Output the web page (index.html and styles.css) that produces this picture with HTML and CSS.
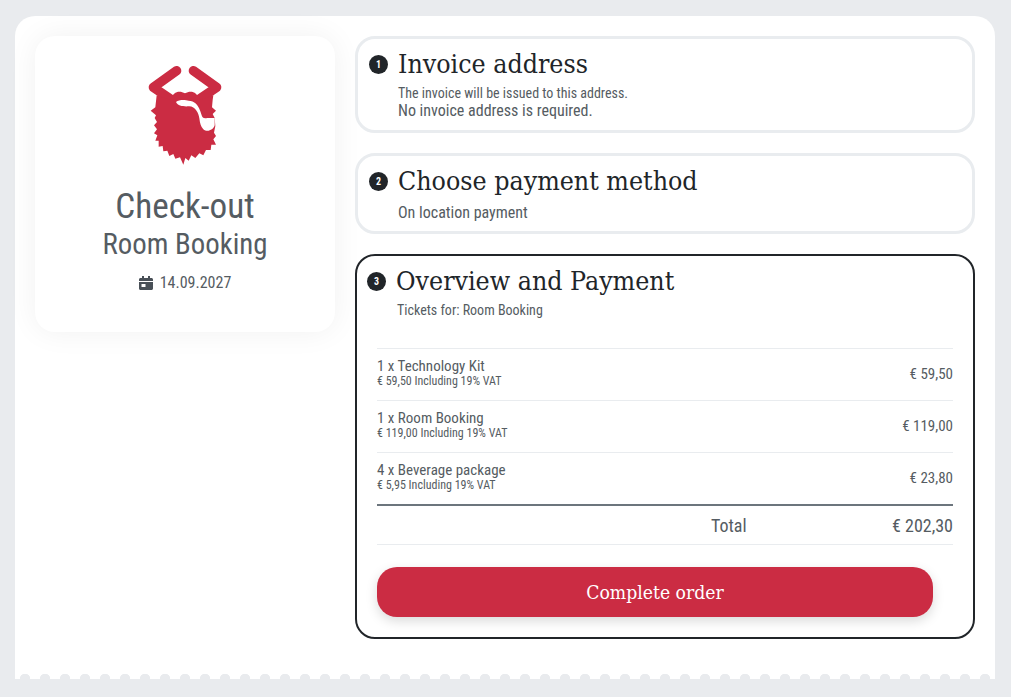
FILE: index.html
```html
<!DOCTYPE html>
<html lang="en">
<head>
    <meta charset="UTF-8">
    <title>Check-out</title>
    <link rel="stylesheet" href="styles.css">
</head>
<body>
    <div class="sheet">
        <aside class="event-card">
            <svg class="logo" viewBox="0 0 390 375" width="130" height="125">
                <path class="logo-horn" d="M170 62 L100 112 L150 146 M220 62 L290 112 L240 146"/>
                <path class="logo-beard" d="M110 136 L150 150 C160 124 178 120 195 130 C212 120 230 124 240 150 L280 136 L278 150 L276 172 L288 182 L278 192 L284 204 L286 228 L282 248 L288 258 L280 268 L288 284 L274 284 L272 300 L258 300 L250 316 L238 310 L226 324 L214 316 L206 332 L196 324 L190 344 L180 322 L166 326 L160 312 L148 318 L142 302 L130 304 L128 288 L116 290 L116 272 L106 272 L112 256 L102 250 L111 238 L102 226 L111 216 L104 204 L108 196 L92 182 L106 172 Z"/>
                <path class="logo-pipe" d="M168 156 C178 148 196 150 206 152 C222 152 236 162 245 196 C247 204 252 206 262 204 L284 204 L284 226 C280 240 262 248 250 238 C242 230 240 220 238 205 C236 190 226 168 206 169 C190 170 174 168 168 156 Z"/>
            </svg>
            <h1 class="event-title">Check-out</h1>
            <h2 class="event-name">Room Booking</h2>
            <p class="event-date">
                <svg class="calendar" viewBox="0 0 14 14" width="14" height="14">
                    <path d="M3 0h2v2h4V0h2v2h1.500C13.300 2 14 2.700 14 3.500V5H0V3.500C0 2.700.7 2 1.500 2H3zM0 6h14v6.500c0 .8-.7 1.500-1.500 1.500h-11C.7 14 0 13.300 0 12.500zm2.500 2v3h4V8z"/>
                </svg>
                14.09.2027
            </p>
        </aside>

        <main class="steps">
            <section class="step">
                <div class="step-head">
                    <span class="step-num">1</span>
                    <h3 class="step-title">Invoice address</h3>
                </div>
                <p class="step-note">The invoice will be issued to this address.</p>
                <p class="step-text">No invoice address is required.</p>
            </section>

            <section class="step step-two">
                <div class="step-head">
                    <span class="step-num">2</span>
                    <h3 class="step-title">Choose payment method</h3>
                </div>
                <p class="step-method">On location payment</p>
            </section>

            <section class="step step-active">
                <div class="step-head">
                    <span class="step-num">3</span>
                    <h3 class="step-title">Overview and Payment</h3>
                </div>
                <p class="step-tickets">Tickets for: Room Booking</p>

                <div class="order">
                    <div class="order-row">
                        <div class="item-info">
                            <div class="item-name">1 x Technology Kit</div>
                            <div class="item-vat">€ 59,50 Including 19% VAT</div>
                        </div>
                        <div class="item-price">€ 59,50</div>
                    </div>
                    <div class="order-row">
                        <div class="item-info">
                            <div class="item-name">1 x Room Booking</div>
                            <div class="item-vat">€ 119,00 Including 19% VAT</div>
                        </div>
                        <div class="item-price">€ 119,00</div>
                    </div>
                    <div class="order-row">
                        <div class="item-info">
                            <div class="item-name">4 x Beverage package</div>
                            <div class="item-vat">€ 5,95 Including 19% VAT</div>
                        </div>
                        <div class="item-price">€ 23,80</div>
                    </div>
                    <div class="order-total">
                        <span class="total-label">Total</span>
                        <span class="total-value">€ 202,30</span>
                    </div>
                </div>

                <button class="complete-btn">Complete order</button>
            </section>
        </main>
    </div>
</body>
</html>
```

FILE: styles.css
```css
* {
    box-sizing: border-box;
}
html, body {
    height: 100%;
}
body {
    margin: 0;
    padding: 16px 16px 18px 15px;
    overflow: hidden;
    background-color: #e9ebee;
    font-family: Roboto, sans-serif;
    font-stretch: condensed;
    color: #555c62;
}
h1, h2, h3, p {
    margin: 0;
    font-weight: 400;
}

.sheet {
    display: flex;
    align-items: flex-start;
    gap: 20px;
    height: 663px;
    padding: 20px 20px 0;
    background-color: #fff;
    border-radius: 20px 20px 0 0;
    background-image: radial-gradient(circle at 10px 5px, #e9ebee 5px, transparent 5.500px);
    background-size: 20px 5px;
    background-position: 0 100%;
    background-repeat: repeat-x;
}

.event-card {
    width: 300px;
    height: 296px;
    padding-top: 22px;
    flex-shrink: 0;
    text-align: center;
    background-color: #fff;
    border-radius: 20px;
    box-shadow: 0 0 30px rgba(0, 0, 0, 0.06);
}
.logo {
    display: block;
    margin: -8px auto 0;
}
.logo-horn {
    fill: none;
    stroke: #cb2c43;
    stroke-width: 28;
    stroke-linecap: round;
    stroke-linejoin: round;
}
.logo-beard {
    fill: #cb2c43;
}
.logo-pipe {
    fill: #fff;
}
.event-title {
    margin-top: 10px;
    font-size: 35.200px;
    line-height: 43px;
}
.event-name {
    font-size: 28.800px;
    line-height: 32px;
}
.event-date {
    display: flex;
    align-items: center;
    justify-content: center;
    gap: 7px;
    margin-top: 13px;
    font-size: 16px;
    line-height: 20px;
}
.calendar {
    fill: #495057;
}

.steps {
    flex: 1;
    display: flex;
    flex-direction: column;
    gap: 20px;
}
.step {
    height: 97px;
    padding: 10px 11px 0;
    border: 3px solid #e9ecef;
    border-radius: 20px;
}
.step-two {
    height: 81px;
}
.step-active {
    height: 385px;
    padding: 10px 20px 0;
    border: 2px solid #212529;
}
.step-head {
    display: flex;
    align-items: center;
    gap: 10px;
    height: 30px;
}
.step-active .step-head {
    margin-left: -10px;
}
.step-num {
    display: flex;
    align-items: center;
    justify-content: center;
    width: 19px;
    height: 19px;
    border-radius: 50%;
    background-color: #212529;
    color: #fff;
    font-size: 10px;
    font-weight: 700;
}
.step-title {
    font-family: "DejaVu Serif", serif;
    font-stretch: condensed;
    font-size: 26.500px;
    line-height: 30px;
    color: #212529;
}
.step-note {
    margin: 6px 0 0 29px;
    font-size: 14px;
    line-height: 16px;
}
.step-text {
    margin-left: 29px;
    font-size: 16px;
    line-height: 20px;
}
.step-method {
    margin: 8px 0 0 29px;
    font-size: 16px;
    line-height: 18px;
}
.step-tickets {
    margin: 5px 0 0 20px;
    font-size: 14px;
    line-height: 18px;
}

.order {
    margin-top: 29px;
}
.order-row {
    display: flex;
    justify-content: space-between;
    align-items: center;
    height: 52px;
    border-top: 1px solid #e9ecef;
}
.item-info {
    padding-bottom: 3px;
}
.item-name {
    font-size: 15px;
    line-height: 17px;
}
.item-vat {
    font-size: 12px;
    line-height: 13px;
}
.item-price {
    padding-bottom: 2px;
    font-size: 15px;
}
.order-total {
    display: flex;
    align-items: center;
    height: 41px;
    border-top: 2px solid #6c757d;
    border-bottom: 1px solid #e9ecef;
    font-size: 18px;
}
.total-label {
    margin-left: 334px;
}
.total-value {
    margin-left: auto;
}

.complete-btn {
    display: block;
    width: 556px;
    height: 50px;
    margin-top: 22px;
    border: none;
    border-radius: 20px;
    background-color: #cb2c43;
    color: #fff;
    font-family: "DejaVu Serif", serif;
    font-stretch: condensed;
    font-size: 19.200px;
    box-shadow: 0 4px 12px rgba(0, 0, 0, 0.15);
}
```
